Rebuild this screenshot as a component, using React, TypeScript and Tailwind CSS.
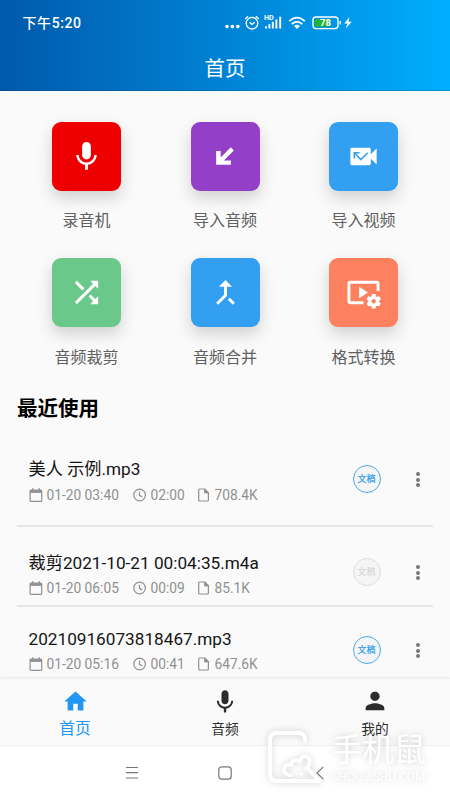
import React from "react";

const tile =
  "flex h-[69px] w-[69px] shrink-0 items-center justify-center rounded-[9px] text-white shadow-[0_7px_16px_rgba(0,0,0,0.17)]";

const MIC =
  "M12 14c1.66 0 2.99-1.34 2.99-3L15 5c0-1.66-1.34-3-3-3S9 3.34 9 5v6c0 1.66 1.34 3 3 3zm5.3-3c0 3-2.54 5.1-5.3 5.1S6.7 14 6.7 11H5c0 3.41 2.72 6.23 6 6.72V21h2v-3.28c3.28-.48 6-3.3 6-6.72h-1.7z";

function Glyph({ className, children }: { className: string; children: React.ReactNode }) {
  return (
    <svg viewBox="0 0 24 24" fill="currentColor" className={className}>
      {children}
    </svg>
  );
}

const tools = [
  { label: "录音机", color: "bg-[#ee0000]", icon: <path d={MIC} /> },
  {
    label: "导入音频",
    color: "bg-[#933fc7]",
    icon: <path d="M5.6 8.2h3.100v4.4l6.900-6.900 2.1 2.100-6.900 6.900h4.900v3H5.6z" />,
  },
  {
    label: "导入视频",
    color: "bg-[#329ff0]",
    icon: (
      <>
        <path d="M17 10.5V7c0-.55-.45-1-1-1H4c-.55 0-1 .45-1 1v10c0 .55.45 1 1 1h12c.55 0 1-.45 1-1v-3.5l4 4v-11l-4 4z" />
        <path
          d="M9.3 9.5H5.7v3.9M6 9.8l4.2 4.3 4.600-4.700"
          fill="none"
          stroke="#329ff0"
          strokeWidth="1.05"
        />
      </>
    ),
  },
  {
    label: "音频裁剪",
    color: "bg-[#6ac88a]",
    icon: (
      <path d="M10.59 9.17L5.41 4 4 5.41l5.17 5.17 1.42-1.41zM14.5 4l2.04 2.04L4 18.59 5.41 20 17.96 7.46 20 9.5V4h-5.5zm.33 9.41l-1.41 1.41 3.13 3.13L14.5 20H20v-5.5l-2.04 2.04-3.13-3.13z" />
    ),
  },
  {
    label: "音频合并",
    color: "bg-[#329ff0]",
    icon: (
      <path d="M17 20.41L18.41 19 15 15.59 13.59 17 17 20.41zM7.5 8H11v5.59L5.59 19 7 20.41l6-6V8h3.5L12 3.5 7.5 8z" />
    ),
  },
  {
    label: "格式转换",
    color: "bg-[#fd805f]",
    icon: (
      <>
        <path d="M3 6h18v5h2V6c0-1.1-.9-2-2-2H3c-1.1 0-2 .9-2 2v12c0 1.1.9 2 2 2h9v-2H3V6z" />
        <path d="M15 12L9 8v8z" />
        <path d="M22.71 18.43c.03-.29.04-.58.01-.86l1.07-.85c.1-.08.12-.21.06-.32l-1.03-1.79c-.06-.11-.19-.15-.31-.11l-1.28.5c-.23-.17-.48-.31-.75-.42l-.2-1.36c-.02-.12-.12-.21-.25-.21h-2.07c-.12 0-.23.09-.25.21l-.2 1.36c-.26.11-.51.26-.74.42l-1.28-.5c-.12-.05-.25 0-.31.11l-1.03 1.79c-.06.11-.04.24.06.32l1.07.86c-.03.29-.04.58-.01.86l-1.07.85c-.1.08-.12.21-.06.32l1.03 1.79c.06.11.19.15.31.11l1.27-.5c.23.17.48.31.75.42l.2 1.36c.02.12.12.21.25.21h2.07c.12 0 .23-.09.25-.21l.2-1.36c.26-.11.51-.26.74-.42l1.28.5c.12.05.25 0 .31-.11l1.03-1.79c.06-.11.04-.24-.06-.32l-1.07-.86zM18.99 19.5c-.83 0-1.5-.67-1.5-1.5s.67-1.5 1.5-1.5 1.5.67 1.5 1.5-.67 1.5-1.5 1.5z" />
      </>
    ),
  },
];

const files = [
  { name: "美人 示例.mp3", date: "01-20 03:40", length: "02:00", size: "708.4K", active: true,
    row: "h-[105px] pt-[35px] border-b-2", meta: "mt-1", action: "pt-2" },
  { name: "裁剪2021-10-21 00:04:35.m4a", date: "01-20 06:05", length: "00:09", size: "85.1K", active: false,
    row: "h-20 pt-6 border-b-2", meta: "mt-[3px]", action: "pt-[7px]" },
  { name: "20210916073818467.mp3", date: "01-20 05:16", length: "00:41", size: "647.6K", active: true,
    row: "h-[71px] pt-5", meta: "mt-[3px]", action: "pt-[9px]" },
];

function StatusBar() {
  return (
    <div className="flex h-[46px] items-center justify-between pl-[22.5px] pr-[97px] text-white">
      <span className="whitespace-nowrap text-[14px] font-medium tracking-[0.6px]">下午5:20</span>
      <svg width="128" height="20" viewBox="225 13 128 20" fill="none" stroke="white">
        <g fill="white" stroke="none">
          <circle cx="227" cy="26.6" r="1.8" />
          <circle cx="232.4" cy="26.6" r="1.8" />
          <circle cx="237.8" cy="26.6" r="1.8" />
        </g>
        <circle cx="252" cy="23.2" r="5.8" strokeWidth="1.3" />
        <path d="M249.6 22.3l2.4 2.1 2.7-2.1M245.2 18.9l2.9-2.6M258.8 18.9l-2.9-2.6" strokeWidth="1.3" />
        <text x="264" y="20.2" fontSize="6.5" fontWeight="700" fill="white" stroke="none" textLength="9.8" lengthAdjust="spacingAndGlyphs">HD</text>
        <path d="M266 28.5v-2.2M269.4 28.5v-4.2M272.8 28.5v-6.7M276.4 28.5V19.4M280.2 28.5V16.8" strokeWidth="1.9" />
        <path d="M289.2 21.2q7.8-7.2 15.6 0M291.7 24.1q5.3-4.8 10.6 0" strokeWidth="1.8" />
        <path d="M294 26q3-2.4 6 0l-3 3z" fill="white" stroke="none" />
        <rect x="313" y="17" width="25" height="11.6" rx="3" strokeWidth="1.4" />
        <rect x="315" y="19" width="15.5" height="7.6" fill="#24b52c" stroke="none" />
        <path d="M340.2 21v3.6" strokeWidth="1.3" />
        <text x="320" y="26" fontSize="9" fontWeight="700" fill="white" stroke="none" textLength="11" lengthAdjust="spacingAndGlyphs">78</text>
        <path d="M349.5 17l-5.2 6.6h3.2l-1.8 5 6-6.9h-3.3z" fill="white" stroke="none" />
      </svg>
    </div>
  );
}

function Watermark() {
  return (
    <div className="pointer-events-none absolute left-[265px] top-[729px] flex h-[60px] w-[170px] [filter:drop-shadow(0_0_3px_rgba(0,0,0,0.12))_drop-shadow(0_0_5px_rgba(0,0,0,0.08))]">
      <svg width="60" height="56" viewBox="0 0 60 56" fill="none" stroke="white" strokeWidth="3.8" strokeLinecap="round" strokeLinejoin="round">
        <path d="M40 12V10c0-4.5-3-6-7-6H12c-5 0-7 2.5-7 7v34c0 5 3 7 7 7H55L43.5 40.5" />
        <path d="M25.5 46.500c-4 0-6.500-2.500-6.500-6s3.500-6 7.500-4c-1.500-5 5-7 8.500-3.500 0-7.500 9.500-7.500 9.500-.5 0 3.500-1.500 6-4 7" strokeWidth="3.4" />
        <circle cx="36.7" cy="45" r="1.6" fill="white" stroke="none" />
      </svg>
      <div className="flex flex-col text-white">
        <span className="ml-[6px] mt-[5px] h-[34px] whitespace-nowrap text-[31.5px] leading-[34px]">手机鼠</span>
        <span className="ml-[6.5px] mt-[2px] whitespace-nowrap text-[11.9px] leading-[14px]">SHOUJISHU.COM</span>
      </div>
    </div>
  );
}

export default function App() {
  return (
    <div className="relative flex h-[800px] w-[450px] flex-col overflow-hidden bg-[#fafafa] font-[Roboto,'Noto_Sans_CJK_SC',sans-serif] text-[#151515]">
      <header className="h-[91px] shrink-0 border-b border-black/15 bg-linear-to-r from-[#0059ab] to-[#00aeff]">
        <StatusBar />
        <h1 className="text-center text-[20.5px] leading-[46px] text-white">首页</h1>
      </header>

      <main className="flex h-[587px] shrink-0 flex-col">
        <section className="grid h-[304px] shrink-0 grid-cols-3 content-start gap-y-[25px] px-[17.25px] pt-[30.5px]">
          {tools.map((t) => (
            <div key={t.label} className="flex h-[111.5px] flex-col items-center">
              <div className={`${tile} ${t.color}`}>
                <Glyph className="h-[35px] w-[35px] overflow-visible">{t.icon}</Glyph>
              </div>
              <span className="mt-[18.5px] shrink-0 text-[16px] leading-6 text-[#606060]">{t.label}</span>
            </div>
          ))}
        </section>

        <h2 className="h-[27px] shrink-0 px-[17px] text-[20.5px] font-bold leading-[29px] text-black">最近使用</h2>

        <section className="mx-[17px]">
          {files.map((f) => (
            <div key={f.name} className={`flex items-start border-[#e6e6e6] pl-[11.5px] ${f.row}`}>
              <div className="min-w-0 flex-1">
                <div className="whitespace-nowrap text-[17.2px] leading-6">{f.name}</div>
                <div className={`flex h-5 items-center whitespace-nowrap text-[13.75px] text-[#909090] ${f.meta}`}>
                  <svg width="14" height="15" viewBox="0 0 14 15" fill="none" stroke="currentColor" strokeWidth="1.2">
                    <rect x="1.1" y="2" width="11.6" height="11.4" rx="1" />
                    <path d="M1.1 3.5H12.7" strokeWidth="2.8" />
                    <path d="M3.7 .3v2M10.1 .3v2" strokeWidth="1.4" />
                  </svg>
                  <span className="ml-1 w-[86px]">{f.date}</span>
                  <svg width="14" height="14" viewBox="0 0 14 14" fill="none" stroke="currentColor" strokeWidth="1.2">
                    <circle cx="6.6" cy="7" r="5.8" />
                    <path d="M6.5 3.7v3.6l2.8 1.8" />
                  </svg>
                  <span className="ml-1 w-[47px]">{f.length}</span>
                  <svg width="12" height="14" viewBox="0 0 12 14" fill="none" stroke="currentColor" strokeWidth="1.2" strokeLinejoin="round">
                    <path d="M.7 2c0-.6.4-1 1-1h5l3.7 3.7V12c0 .6-.4 1-1 1H1.7c-.6 0-1-.4-1-1z" />
                    <path d="M6.5 1v4h4z" fill="currentColor" strokeWidth=".8" />
                  </svg>
                  <span className="ml-[5px]">{f.size}</span>
                </div>
              </div>
              <div className={`flex items-center ${f.action}`}>
                <span
                  className={
                    f.active
                      ? "flex h-7 w-7 items-center justify-center rounded-full border border-[#4aa9e9] bg-[#f5f5f5] pt-px text-[9px] font-medium text-[#2d9be8]"
                      : "flex h-7 w-7 items-center justify-center rounded-full border border-[#dedede] bg-[#f5f5f5] pt-px text-[9px] font-medium text-[#d8d8d8]"
                  }
                >
                  文稿
                </span>
                <span className="ml-[35.5px] mr-[13px] flex flex-col gap-[1.8px] pt-px">
                  <i className="h-1 w-1 rounded-full bg-[#777]" />
                  <i className="h-1 w-1 rounded-full bg-[#777]" />
                  <i className="h-1 w-1 rounded-full bg-[#777]" />
                </span>
              </div>
            </div>
          ))}
        </section>
      </main>

      <nav className="grid h-[68px] shrink-0 grid-cols-3 border-y border-[#f0f0f0] bg-[#fafafa] text-[#2b2b2b] shadow-[0_-1px_2px_rgba(0,0,0,0.05)]">
        <div className="flex flex-col items-center text-[#2196f3]">
          <Glyph className="mt-[9px] h-[27px] w-[27px]">
            <path d="M10 20v-6h4v6h5v-8h3L12 3 2 12h3v8z" />
          </Glyph>
          <span className="mt-[2px] text-[15.75px] leading-6">首页</span>
        </div>
        <div className="flex flex-col items-center">
          <Glyph className="mt-[9px] h-[28px] w-[28px]">
            <path d={MIC} />
          </Glyph>
          <span className="mt-[5px] text-[13.75px] leading-4">音频</span>
        </div>
        <div className="flex flex-col items-center">
          <Glyph className="mt-[8px] h-[28px] w-[28px]">
            <path d="M12 12c2.21 0 4-1.79 4-4s-1.79-4-4-4-4 1.79-4 4 1.79 4 4 4zm0 2c-2.67 0-8 1.34-8 4v2h16v-2c0-2.66-5.33-4-8-4z" />
          </Glyph>
          <span className="mt-[6px] text-[13.75px] leading-4">我的</span>
        </div>
      </nav>

      <footer className="flex flex-1 items-start bg-white pl-[125px] pt-[19px] text-[#777]">
        <svg width="14" height="15" viewBox="0 0 14 15" stroke="currentColor" strokeWidth="1.2">
          <path d="M1 2.5h12M1 7.7h12M1 13h12" />
        </svg>
        <svg width="14" height="15" viewBox="0 0 14 15" className="ml-[79px]" fill="none" stroke="currentColor" strokeWidth="1.2">
          <rect x=".8" y="1.8" width="12.4" height="12.4" rx="3" />
        </svg>
      </footer>
      <Watermark />
      <svg width="8" height="14" viewBox="0 0 8 14" className="absolute left-[315.5px] top-[766px]" fill="none" stroke="#777" strokeWidth="1.1">
        <path d="M7.3 .8L1 7l6.3 6.2" />
      </svg>
    </div>
  );
}
